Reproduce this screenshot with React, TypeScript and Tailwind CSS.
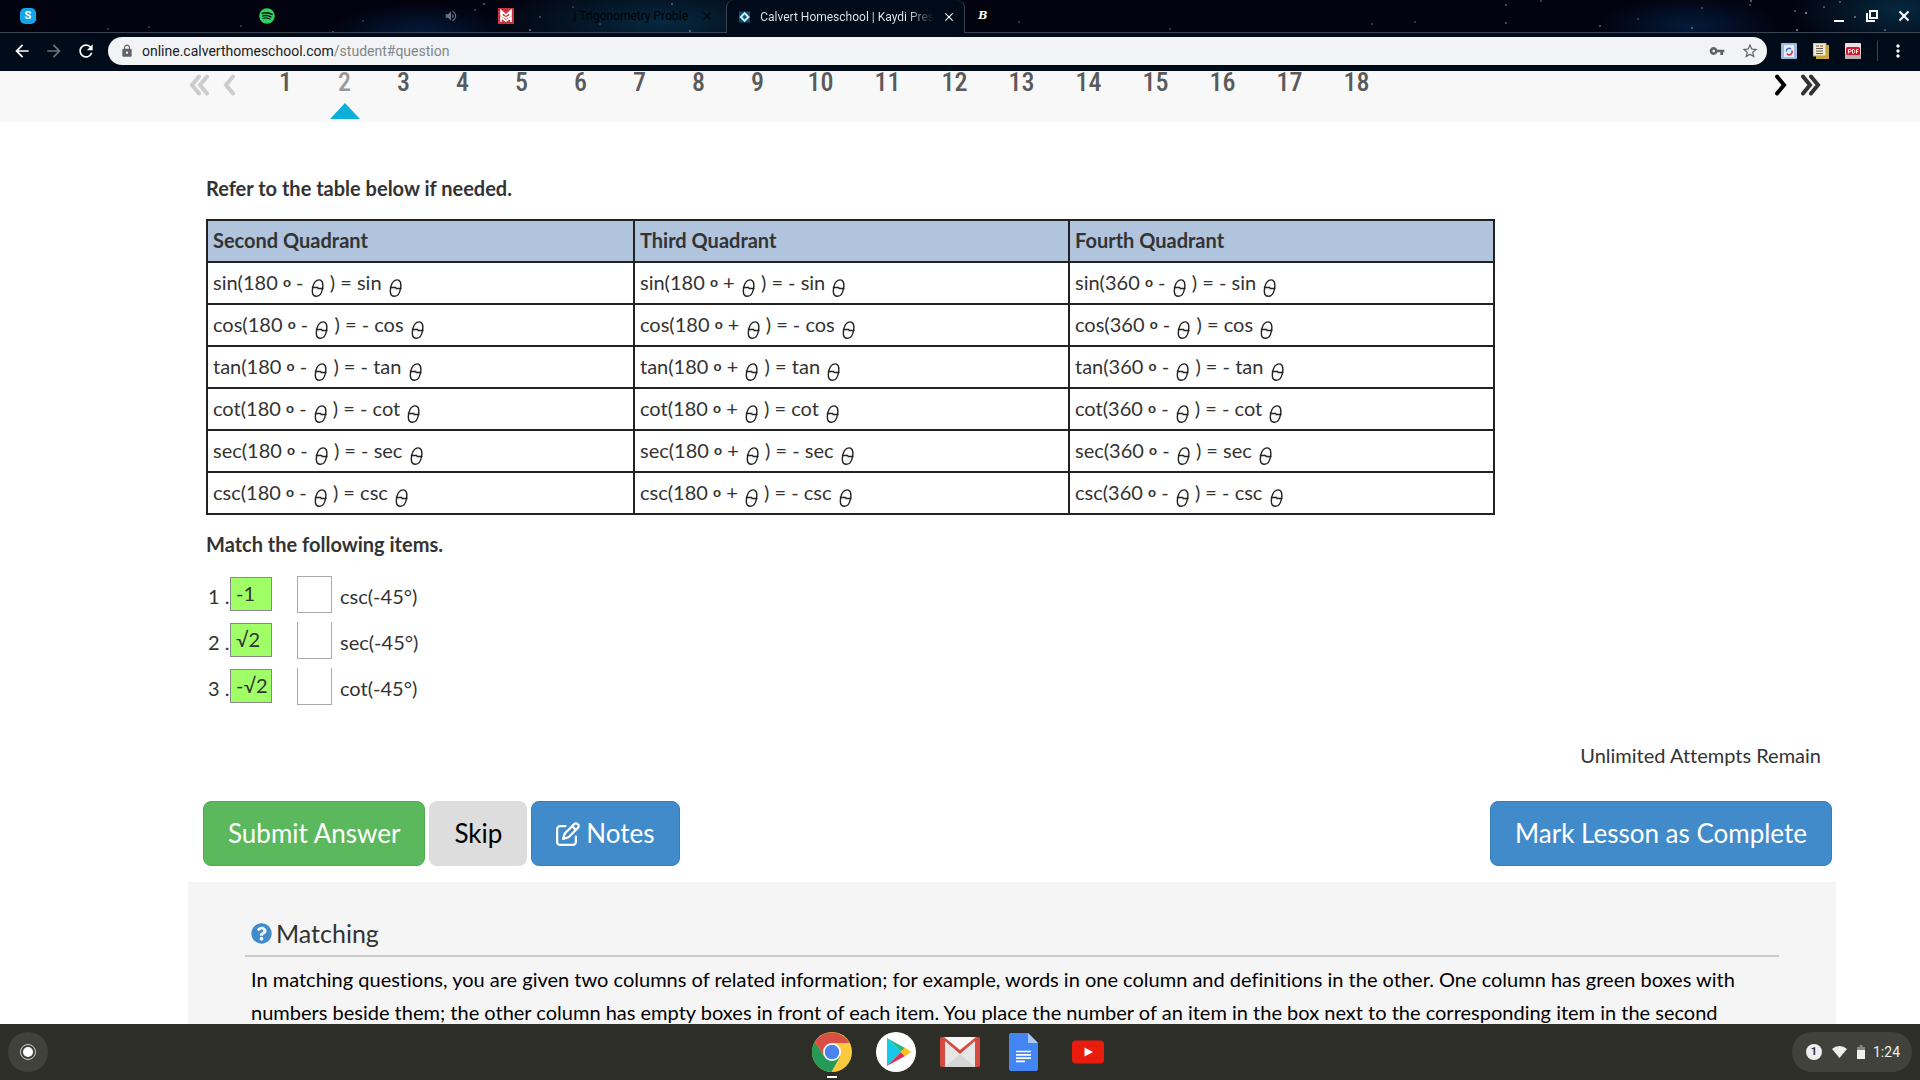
import React from "react";
import { FaQuestionCircle, FaSpotify } from "react-icons/fa";
import { FaRegPenToSquare } from "react-icons/fa6";
import { MdArrowBack, MdArrowForward, MdRefresh, MdLock, MdVpnKey, MdStarBorder, MdVolumeUp, MdClose, MdMoreVert } from "react-icons/md";

const stars = [
  [36, 20, 0.3], [108, 29, 0.3], [149, 27, 0.35], [241, 26, 0.3], [333, 32, 0.5], [363, 21, 0.3], [484, 4, 0.5], [475, 10, 0.35],
  [530, 30, 0.6], [540, 17, 0.4], [573, 7, 0.3], [600, 24, 0.3], [672, 4, 0.5], [690, 31, 0.5], [1019, 22, 0.3], [1170, 29, 0.35],
  [1372, 24, 0.35], [1415, 22, 0.35], [1506, 5, 0.45], [1506, 23, 0.45], [1541, 1, 0.4], [1600, 26, 0.5], [1638, 19, 0.35], [1692, 28, 0.5],
  [1702, 8, 0.4], [1751, 1, 0.6], [1750, 5, 0.4], [1795, 11, 0.5], [1806, 13, 0.8], [1797, 30, 0.7], [1824, 7, 0.5], [1840, 2, 0.5], [1855, 17, 0.6], [1885, 30, 0.5],
];

function Starfield() {
  return (
    <svg className="absolute inset-0 h-full w-full" viewBox="0 0 1920 32" preserveAspectRatio="none" aria-hidden="true">
      <defs>
        <radialGradient id="nebula">
          <stop offset="0" stopColor="#031a3a" />
          <stop offset="1" stopColor="#031a3a" stopOpacity="0" />
        </radialGradient>
        <radialGradient id="teal">
          <stop offset="0" stopColor="#06283f" />
          <stop offset="1" stopColor="#06283f" stopOpacity="0" />
        </radialGradient>
      </defs>
      <rect width="1920" height="32" fill="#02030f" />
      <ellipse cx="420" cy="32" rx="90" ry="28" fill="url(#nebula)" />
      <ellipse cx="660" cy="22" rx="170" ry="46" fill="url(#teal)" />
      <ellipse cx="1690" cy="26" rx="90" ry="30" fill="url(#nebula)" />
      <ellipse cx="1900" cy="10" rx="110" ry="44" fill="url(#teal)" />
      {stars.map(([x, y, o]) => (
        <circle key={`${x}-${y}`} cx={x} cy={y} r="1" fill="#b9c4e0" opacity={o} />
      ))}
    </svg>
  );
}

function CalvertIcon() {
  return (
    <svg width="14" height="14" viewBox="0 0 14 14" aria-hidden="true">
      <rect width="14" height="14" fill="#0d4a63" />
      <path d="M7 0.5 13.5 7 7 13.5 0.5 7Z" fill="#c9f3fb" />
      <path d="M7 4 10 7 7 10 4 7Z" fill="#0d5878" />
    </svg>
  );
}

function TabStrip() {
  return (
    <div className="relative flex h-8 items-stretch bg-[#02030f] pl-2 text-xs text-black">
      <Starfield />
      <div className="relative flex w-[239px] items-center px-3">
        <span className="flex size-4 items-center justify-center rounded-[5px] bg-[#12a5e8] text-[11px] font-bold text-white">S</span>
      </div>
      <div className="relative flex w-[239px] items-center justify-between pr-7 pl-3">
        <FaSpotify className="size-4 text-[#2ed15f]" />
        <MdVolumeUp className="size-3.5 text-[#6a7384]" />
      </div>
      <div className="relative flex w-[240px] items-center gap-2 px-3">
        <svg width="16" height="16" viewBox="0 0 16 16" aria-hidden="true">
          <rect width="16" height="16" fill="#c9343c" />
          <path d="M3 8V2.500L8 7l5-4.500V8M3 14V9.500L8 13l5-3.500V14M4 4v4l4 2 4-2V4" fill="none" stroke="#fff" strokeWidth="1.600" />
        </svg>
        <span className="flex-1 pr-1 text-right whitespace-nowrap">| Trigonometry Proble</span>
        <MdClose className="size-3.5 text-[#01040a]" />
      </div>
      <div className="relative z-10 -mb-px flex w-[239px] items-center gap-2 rounded-t-lg border-x border-[#3b4450] bg-[#000b1a] pr-2 pl-3">
        <CalvertIcon />
        <span className="flex-1 bg-linear-to-r from-[#e8eaed] from-85% to-transparent bg-clip-text pl-0.5 whitespace-nowrap text-transparent">
          Calvert Homeschool | Kaydi Pres
        </span>
        <button type="button" aria-label="Close tab" className="text-white">
          <MdClose className="size-3.5" />
        </button>
      </div>
      <div className="relative flex flex-1 items-center pl-3">
        <span className="flex h-4 w-3 items-center justify-center bg-black font-['DejaVu_Serif',serif] text-[11px] font-bold text-white italic">B</span>
      </div>
      <div className="relative flex items-center gap-5 pr-2.5 text-white">
        <button type="button" aria-label="Minimize" className="flex size-3 items-end">
          <span className="h-0.5 w-2.5 bg-white" />
        </button>
        <button type="button" aria-label="Restore">
          <svg width="12" height="12" viewBox="0 0 12 12" fill="none" stroke="#fff" strokeWidth="2">
            <path d="M4 1h7v7H4zM1 3v8h8" />
          </svg>
        </button>
        <button type="button" aria-label="Close window">
          <svg width="12" height="12" viewBox="0 0 12 12" stroke="#fff" strokeWidth="2">
            <path d="M1.500 1.500l9 9M10.500 1.500l-9 9" />
          </svg>
        </button>
      </div>
    </div>
  );
}

function Toolbar() {
  return (
    <div className="flex h-[39px] items-center border-t border-[#3b4450] bg-[#000b1a] pr-3 pb-0.5 pl-3 text-white">
      <div className="flex w-24 items-center gap-3">
        <button type="button" aria-label="Back"><MdArrowBack className="size-5" /></button>
        <button type="button" aria-label="Forward" className="text-[#6b7480]"><MdArrowForward className="size-5" /></button>
        <button type="button" aria-label="Reload"><MdRefresh className="size-5" /></button>
      </div>
      <div className="flex h-7 flex-1 items-center rounded-full bg-[#f1f3f4] pr-2 pl-3 text-[#5f6368]">
        <MdLock className="size-3.5" />
        <span className="flex-1 pl-2 text-sm text-[#80868b]"><span className="text-[#202124]">online.calverthomeschool.com</span>/student#question</span>
        <div className="flex items-center gap-4">
          <MdVpnKey className="size-4" />
          <button type="button" aria-label="Bookmark this tab"><MdStarBorder className="size-[18px]" /></button>
        </div>
      </div>
      <div className="flex items-center gap-4 pl-3.5">
        <svg width="16" height="16" viewBox="0 0 16 16" aria-hidden="true">
          <rect width="16" height="16" rx="1" fill="#9dbbe0" />
          <rect x="3" y="2" width="10" height="12" fill="#e4eef8" />
          <path d="M5.500 8.500A2.700 2.700 0 0 1 10 6" fill="none" stroke="#2f6ec0" strokeWidth="1.500" />
          <path d="M10.600 7.500A2.700 2.700 0 0 1 6 10.500" fill="none" stroke="#d2343a" strokeWidth="1.500" />
        </svg>
        <svg width="16" height="16" viewBox="0 0 16 16" aria-hidden="true">
          <path d="M3 2h13v14H3z" fill="#c9a93c" />
          <path d="M0 0h13v13H0z" fill="#f3ead0" stroke="#c2a24a" />
          <path d="M3 3h3M3 5.500h7M3 8h7M3 10.500h7" stroke="#5b5b5b" />
          <path d="M7 3h3" stroke="#c33" />
        </svg>
        <svg width="16" height="16" viewBox="0 0 16 16" aria-hidden="true">
          <rect width="16" height="16" rx="1" fill="#f0dede" />
          <rect x="0" y="11" width="16" height="5" fill="#b9b0b0" />
          <rect x="1" y="4" width="14" height="8" rx="1.500" fill="#d3172b" />
          <path d="M3.500 10.500v-4h1.500a1 1 0 0 1 0 2.300H3.500M7.500 6.500h1a2 2 0 0 1 0 3.800h-1zM11.500 10.500v-4h2M11.500 8.500h1.500" fill="none" stroke="#fff" strokeWidth="0.900" />
        </svg>
        <span className="h-5 w-px bg-[#3c4652]" />
        <button type="button" aria-label="Browser menu" className="-ml-1.5"><MdMoreVert className="size-5" /></button>
      </div>
    </div>
  );
}

function Chevron({ double = false, left = false, color }: { double?: boolean; left?: boolean; color: string }) {
  return (
    <svg width={double ? 22 : 14} height="22" viewBox={double ? "0 0 22 22" : "0 0 14 22"} fill="none" stroke={color} strokeWidth="4" strokeLinecap="round" className={left ? "rotate-180" : ""}>
      <path d="M3 2.500l7 8.500-7 8.500" />
      {double && <path d="M11 2.500l7 8.500-7 8.500" />}
    </svg>
  );
}

function QuestionNav() {
  const numbers = Array.from({ length: 18 }, (_, i) => i + 1);
  return (
    <nav aria-label="Questions" className="flex h-[51px] items-start bg-[#f8f8f8] pr-[98px] pl-[188px]">
      <div className="flex gap-3 pt-[3px]">
        <button type="button" aria-label="First"><Chevron double left color="#ccc" /></button>
        <button type="button" aria-label="Previous"><Chevron left color="#ccc" /></button>
      </div>
      <ol className="ml-5 flex flex-1 font-['Roboto_Condensed','Roboto',sans-serif] text-[26px] leading-[22px] font-medium text-[#5a5a5a]">
        {numbers.map((n) => (
          <li key={n} className={n < 10 ? "w-[59px]" : "w-[67px]"}>
            <a href={`#question-${n}`} className={n === 2 ? "flex flex-col items-center gap-2.5 text-[#999]" : "flex flex-col items-center"}>
              {n}
              {n === 2 && (
                <svg width="30" height="16" viewBox="0 0 30 16" aria-hidden="true">
                  <path d="M15 0 30 16H0Z" fill="#0bafd9" />
                </svg>
              )}
            </a>
          </li>
        ))}
      </ol>
      <div className="flex gap-3 pt-[3px]">
        <button type="button" aria-label="Next"><Chevron color="#000" /></button>
        <button type="button" aria-label="Last"><Chevron double color="#333" /></button>
      </div>
    </nav>
  );
}

function Theta() {
  return (
    <svg width="13" height="18" viewBox="0 0 13 18" fill="none" stroke="#222" role="img" aria-label="theta" className="mr-px ml-0.5 inline-block translate-y-[7px] align-baseline">
      <path d="M3 4.500C4.500 1.500 7.500 0.300 9.500 1.200 12 2.500 12.300 5.500 11.500 9.500 10.800 14 8.500 17.300 5.500 17.300 2.500 17.300 1.300 14.500 1.300 12 1.300 9 2 6.500 3 4.500Z" strokeWidth="1.400" />
      <path d="M0.800 8.500h6.500M6.500 9.500h6" strokeWidth="1.500" />
    </svg>
  );
}

type Row = [string, string][];
const quadrants: Row[] = ["sin", "cos", "tan", "cot", "sec", "csc"].map((fn) => [
  [`${fn}(180 -`, fn === "sin" || fn === "csc" ? fn : `- ${fn}`],
  [`${fn}(180 +`, fn === "tan" || fn === "cot" ? fn : `- ${fn}`],
  [`${fn}(360 -`, fn === "cos" || fn === "sec" ? fn : `- ${fn}`],
]);

function Identity({ left, right }: { left: string; right: string }) {
  const [angle, sign] = left.split(" ");
  return (
    <>
      {angle} <span className="align-[3px] text-sm leading-none font-bold">o</span> {sign} <Theta /> ) = {right} <Theta />
    </>
  );
}

function QuadrantTable() {
  return (
    <table className="mt-[15px] w-[1289px] max-w-full table-fixed border-collapse border-2 border-[#222]">
      <colgroup>
        <col className="w-[427px]" />
        <col className="w-[435px]" />
        <col />
      </colgroup>
      <thead>
        <tr className="h-[42px] bg-[#b0c4de] text-left">
          {["Second Quadrant", "Third Quadrant", "Fourth Quadrant"].map((h) => (
            <th key={h} scope="col" className="border-2 border-[#222] px-[5px] pt-0 pb-0.5 font-bold">{h}</th>
          ))}
        </tr>
      </thead>
      <tbody>
        {quadrants.map((row) => (
          <tr key={row[0][0]} className="h-[42px]">
            {row.map(([l, r]) => (
              <td key={l} className="border-2 border-[#222] px-[5px] pt-0 pb-0.5 leading-7">
                <Identity left={l} right={r} />
              </td>
            ))}
          </tr>
        ))}
      </tbody>
    </table>
  );
}

const items = [
  ["-1", "csc(-45°)"],
  ["√2", "sec(-45°)"],
  ["-√2", "cot(-45°)"],
];

function MatchList() {
  return (
    <ol className="mt-[11px]">
      {items.map(([answer, prompt], i) => (
        <li key={prompt} className="flex h-[46px] items-center">
          <span className="w-6 pt-1 pl-0.5">{i + 1} .</span>
          <span className="flex h-[34px] w-[42px] items-center border border-[#888] bg-[#a0ff66] pb-0.5 pl-[5px] leading-6">{answer}</span>
          <input
            id={`match-${i}`}
            type="text"
            className={i === 0 ? "ml-[25px] mr-2 h-[37px] w-[35px] border border-[#aaa] bg-white text-center" : "ml-[25px] mr-2 h-[37px] w-[35px] border border-t-0 border-[#aaa] bg-white text-center"}
          />
          <label htmlFor={`match-${i}`} className="pt-1">{prompt}</label>
        </li>
      ))}
    </ol>
  );
}

function Shelf() {
  return (
    <footer className="grid h-14 shrink-0 grid-cols-3 items-center bg-[#2d2e27] px-2 font-['Roboto',sans-serif]">
      <button type="button" aria-label="Launcher" className="flex size-10 items-center justify-center rounded-full bg-[#41423b]">
        <span className="flex size-4 items-center justify-center rounded-full border border-[#ccc]">
          <span className="size-2.5 rounded-full bg-white" />
        </span>
      </button>
      <div className="flex items-center justify-center gap-6">
        <button type="button" aria-label="Chrome" className="relative">
          <svg width="40" height="40" viewBox="0 0 40 40">
            <circle cx="20" cy="20" r="20" fill="#fbca3e" />
            <path d="M2.700 10A20 20 0 0 0 19.500 40L28 24.500 20 20 12 24Z" fill="#249a58" />
            <path d="M2.700 10A20 20 0 0 1 37.300 11H20L12.200 24.500Z" fill="#d84f43" />
            <circle cx="20" cy="20" r="9" fill="#fff" />
            <circle cx="20" cy="20" r="7.300" fill="#4a83ee" />
          </svg>
          <span className="absolute -bottom-1.5 left-[15px] h-0.5 w-2.5 bg-white" />
        </button>
        <button type="button" aria-label="Play Store">
          <svg width="40" height="40" viewBox="0 0 40 40">
            <circle cx="20" cy="20" r="20" fill="#fff" />
            <path d="M11 6v28L25 20Z" fill="#14c8e8" />
            <path d="M11 6 29 16 25 20Z" fill="#26b98a" />
            <path d="M11 34 29 24 25 20Z" fill="#d9304f" />
            <path d="M29 15.500 35 20 29 24.500 24.500 20Z" fill="#fbc21d" />
          </svg>
        </button>
        <button type="button" aria-label="Gmail">
          <svg width="40" height="40" viewBox="0 0 40 40">
            <rect y="5" width="40" height="30" rx="2" fill="#d54b3f" />
            <path d="M5 9v26h30V9L20 22Z" fill="#e6e6e6" />
            <path d="M5 35 20 22l15 13Z" fill="#d6d6d6" />
            <path d="M4 5h32L20 18Z" fill="#f5f5f5" />
          </svg>
        </button>
        <button type="button" aria-label="Docs" className="flex w-10 justify-center">
          <svg width="30" height="40" viewBox="0 0 30 40">
            <path d="M2 1h17l10 10v26a2 2 0 0 1-2 2H2a2 2 0 0 1-2-2V3a2 2 0 0 1 2-2Z" fill="#4485f4" />
            <path d="M19 1 29 11H19Z" fill="#a9c7fa" />
            <path d="M7 19.500h15M7 22.800h15M7 26.100h15M7 29.400h9" stroke="#fff" strokeWidth="1.700" />
          </svg>
        </button>
        <button type="button" aria-label="YouTube" className="flex w-10 justify-center">
          <svg width="32" height="24" viewBox="0 0 32 24">
            <rect width="32" height="23" y="0.500" rx="4" fill="#ea1c0d" />
            <path d="M12.500 7.500v9L21 12Z" fill="#fff" />
          </svg>
        </button>
      </div>
      <button type="button" className="flex h-10 w-[120px] items-center justify-end gap-2.5 justify-self-end rounded-full bg-[#41423b] pr-3 text-sm text-[#eee]">
        <span className="flex size-4 items-center justify-center rounded-full bg-[#eee] text-[11px] font-bold text-[#333]">1</span>
        <svg width="15" height="12" viewBox="0 0 15 12" aria-hidden="true"><path d="M0 3a11 11 0 0 1 15 0L7.500 12Z" fill="#eee" /></svg>
        <svg width="8" height="14" viewBox="0 0 8 14" aria-hidden="true">
          <path d="M2.500 0h3v2H8v3H0V2h2.500Z" fill="#88887f" />
          <path d="M0 5h8v9H0Z" fill="#eee" />
        </svg>
        <span className="-ml-0.5">1:24</span>
      </button>
    </footer>
  );
}

export default function App() {
  return (
    <div className="flex h-screen flex-col overflow-hidden bg-white">
      <header className="shrink-0 font-['Roboto',sans-serif]">
        <TabStrip />
        <Toolbar />
      </header>
      <main className="min-h-0 flex-1 overflow-hidden font-['Lato',sans-serif] text-xl text-[#333] [font-variant-ligatures:none]">
        <QuestionNav />
        <div className="mr-[84px] ml-[188px]">
          <section className="pt-[50px] pr-[15px] pl-[18px]">
            <p className="leading-8 font-bold">Refer to the table below if needed.</p>
            <QuadrantTable />
            <p className="mt-[13px] leading-8 font-bold">Match the following items.</p>
            <MatchList />
            <p className="mt-[30px] text-right leading-8">Unlimited Attempts Remain</p>
          </section>
          <div className="mt-[30px] flex gap-1 pr-1 pl-[15px] text-[26px]">
            <button type="button" className="h-[65px] rounded-lg border border-[#4cae4c] bg-[#5cb85c] px-6 text-white">Submit Answer</button>
            <button type="button" className="h-[65px] rounded-lg bg-[#ddd] px-[25px] text-black">Skip</button>
            <button type="button" className="flex h-[65px] items-center gap-1.5 rounded-lg border border-[#357ebd] bg-[#428bca] px-6 text-white">
              <FaRegPenToSquare className="size-6" />
              Notes
            </button>
            <button type="button" className="ml-auto h-[65px] rounded-lg border border-[#357ebd] bg-[#428bca] px-6 text-white">Mark Lesson as Complete</button>
          </div>
          <section className="mt-4 bg-[#f5f5f5] px-[57px] pt-[33px]">
            <h2 className="flex items-center gap-1 border-b-2 border-[#ccc] px-1.5 pb-1 text-[25px] leading-9">
              <FaQuestionCircle className="size-[21px] text-[#428bca]" />
              Matching
            </h2>
            <p className="px-1.5 pt-1.5 leading-[33px] text-black">
              In matching questions, you are given two columns of related information; for example, words in one column and definitions in the other. One column has green boxes with numbers beside them; the other column has empty boxes in front of each item. You place the number of an item in the box next to the corresponding item in the second
            </p>
          </section>
        </div>
      </main>
      <Shelf />
    </div>
  );
}
